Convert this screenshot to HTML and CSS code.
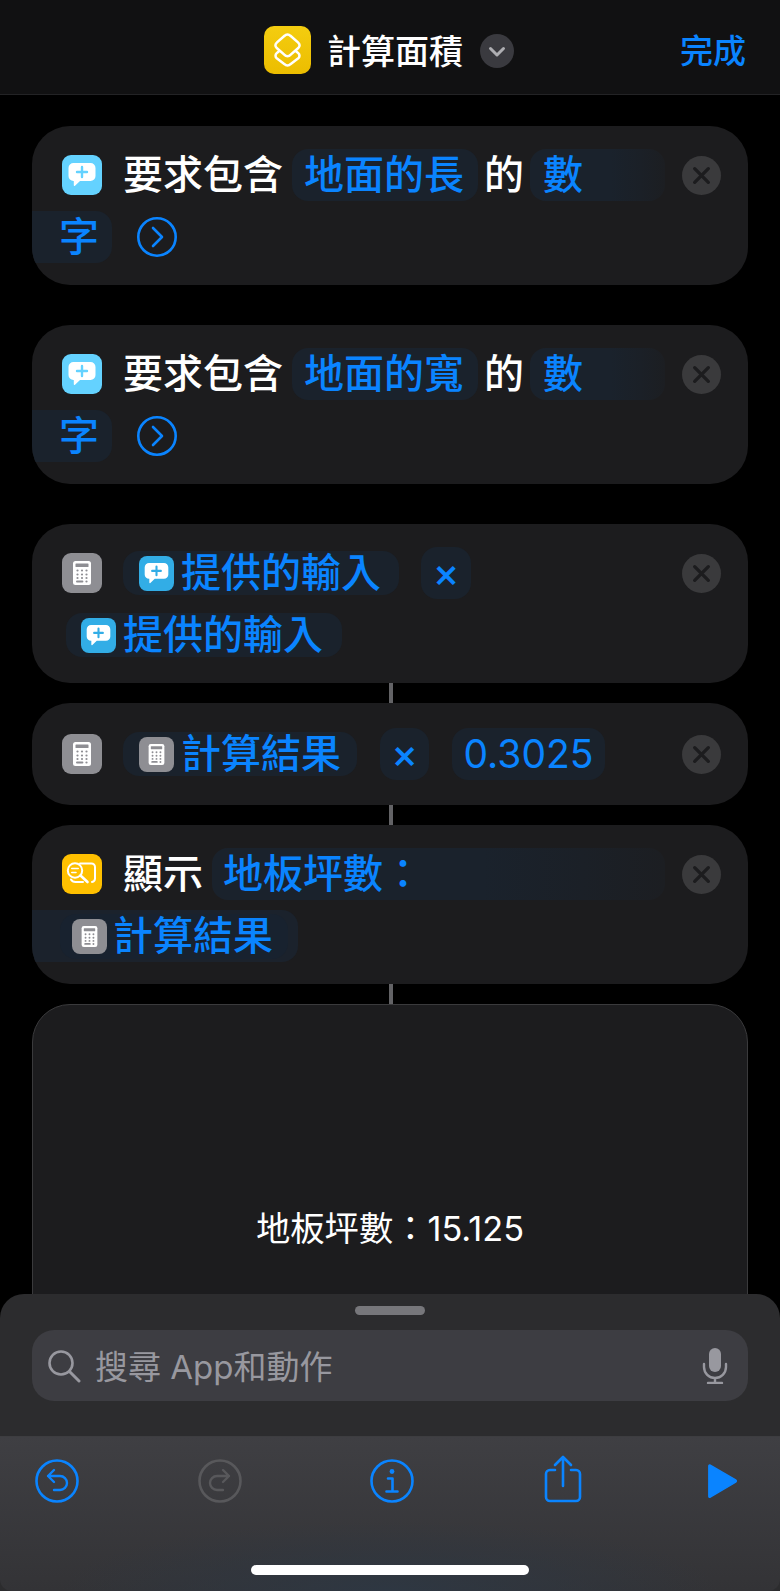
FILE: index.html
```html
<!DOCTYPE html>
<html lang="zh-Hant">
<head>
<meta charset="utf-8">
<title>計算面積</title>
<link rel="stylesheet" href="styles.css">
</head>
<body>
<svg class="defs" width="0" height="0" aria-hidden="true">
  <symbol id="bubble" viewBox="0 0 40 40">
    <path fill="#fff" d="M11.5 8h17a5 5 0 0 1 5 5v8a5 5 0 0 1-5 5H18l-5 4.8c-.6.5-1.2.2-1.2-.5V26h-.3a5 5 0 0 1-5-5v-8a5 5 0 0 1 5-5z"/>
    <path fill="none" stroke="currentColor" stroke-width="2.4" stroke-linecap="round" d="M20 12v10M15 17h10"/>
  </symbol>
  <symbol id="calc" viewBox="0 0 40 40">
    <rect x="11" y="8" width="18" height="24" rx="2.5" fill="#fff"/>
    <rect x="13.5" y="10.5" width="13" height="3.6" rx=".6" fill="#8e8e93"/>
    <g fill="#8e8e93">
      <circle cx="15.5" cy="17.5" r="1.1"/><circle cx="20" cy="17.5" r="1.1"/><circle cx="24.5" cy="17.5" r="1.1"/>
      <circle cx="15.5" cy="21.5" r="1.1"/><circle cx="20" cy="21.5" r="1.1"/><circle cx="24.5" cy="21.5" r="1.1"/>
      <circle cx="15.5" cy="25" r="1.1"/><circle cx="20" cy="25" r="1.1"/><circle cx="24.5" cy="25" r="1.1"/>
      <rect x="14" y="27.5" width="7.4" height="2" rx="1"/><circle cx="24.5" cy="28.5" r="1.1"/>
    </g>
  </symbol>
</svg>

<div class="page">
  <header class="nav">
    <span class="app-icon">
      <svg class="fill" viewBox="0 0 48 48"><g fill="none" stroke="#fff" stroke-width="2.6" stroke-linecap="round" stroke-linejoin="round"><path d="M21 9.5a4 4 0 0 1 6 0l8 7a3.5 3.5 0 0 1 0 5.5l-8 7a4 4 0 0 1-6 0l-8-7a3.5 3.5 0 0 1 0-5.5z"/><path d="M15 25.5l-2 1.7a3.5 3.5 0 0 0 0 5.3l8 6a4 4 0 0 0 6 0l8-6a3.5 3.5 0 0 0 0-5.3l-2-1.7"/></g></svg>
    </span>
    <span class="nav-title">計算面積</span>
    <span class="nav-chevron">
      <svg class="fill" viewBox="0 0 34 34"><path d="M10.5 14.5l6.5 6.5 6.5-6.5" fill="none" stroke="#aeaeb2" stroke-width="3" stroke-linecap="round" stroke-linejoin="round"/></svg>
    </span>
    <span class="nav-done">完成</span>
  </header>

  <main class="flow">
    <section class="card">
      <div class="body">
        <div class="row">
          <span class="ic ic-ask"><svg class="fill"><use href="#bubble"/></svg></span>
          <span class="label first">要求包含</span>
          <span class="token tall p-std">地面的長</span>
          <span class="label of">的</span>
          <span class="token tall open num-open">數</span>
        </div>
        <div class="row">
          <span class="token tall close num-close">字</span>
          <svg class="more" viewBox="0 0 40 40"><circle cx="20" cy="20" r="18.7" fill="none" stroke="#0a84ff" stroke-width="2.6"/><path d="M16 11l9 9-9 9" fill="none" stroke="#0a84ff" stroke-width="2.6" stroke-linecap="round" stroke-linejoin="round"/></svg>
        </div>
      </div>
      <span class="remove"><svg class="fill" viewBox="0 0 40 40"><path d="M13 13l14 14M27 13L13 27"/></svg></span>
    </section>

    <div class="gap-large"></div>

    <section class="card">
      <div class="body">
        <div class="row">
          <span class="ic ic-ask"><svg class="fill"><use href="#bubble"/></svg></span>
          <span class="label first">要求包含</span>
          <span class="token tall p-std">地面的寬</span>
          <span class="label of">的</span>
          <span class="token tall open num-open">數</span>
        </div>
        <div class="row">
          <span class="token tall close num-close">字</span>
          <svg class="more" viewBox="0 0 40 40"><circle cx="20" cy="20" r="18.7" fill="none" stroke="#0a84ff" stroke-width="2.6"/><path d="M16 11l9 9-9 9" fill="none" stroke="#0a84ff" stroke-width="2.6" stroke-linecap="round" stroke-linejoin="round"/></svg>
        </div>
      </div>
      <span class="remove"><svg class="fill" viewBox="0 0 40 40"><path d="M13 13l14 14M27 13L13 27"/></svg></span>
    </section>

    <div class="gap-large"></div>

    <section class="card">
      <div class="body">
        <div class="row">
          <span class="ic ic-calc"><svg class="fill"><use href="#calc"/></svg></span>
          <span class="token var first-var"><span class="ic-sm ic-ask-dark"><svg class="fill"><use href="#bubble"/></svg></span><span class="var-text">提供的輸入</span></span>
          <span class="token tall op op-a">×</span>
        </div>
        <div class="row">
          <span class="token var second-var"><span class="ic-sm ic-ask-dark"><svg class="fill"><use href="#bubble"/></svg></span><span class="var-text">提供的輸入</span></span>
        </div>
      </div>
      <span class="remove"><svg class="fill" viewBox="0 0 40 40"><path d="M13 13l14 14M27 13L13 27"/></svg></span>
    </section>

    <div class="link"></div>

    <section class="card card-single">
      <div class="body">
        <div class="row">
          <span class="ic ic-calc"><svg class="fill"><use href="#calc"/></svg></span>
          <span class="token var first-var result"><span class="ic-sm ic-calc"><svg class="fill"><use href="#calc"/></svg></span><span class="var-text">計算結果</span></span>
          <span class="token tall op op-b">×</span>
          <span class="token tall value">0.3025</span>
        </div>
      </div>
      <span class="remove"><svg class="fill" viewBox="0 0 40 40"><path d="M13 13l14 14M27 13L13 27"/></svg></span>
    </section>

    <div class="link"></div>

    <section class="card">
      <div class="body">
        <div class="row">
          <span class="ic ic-show">
            <svg class="fill" viewBox="0 0 40 40"><g fill="none" stroke="#fff" stroke-width="2" stroke-linecap="round" stroke-linejoin="round"><path d="M18 9.5h11.5a3.5 3.5 0 0 1 3.5 3.5v11.5a3.5 3.5 0 0 1-3 3.4"/><path d="M9 25.5c.8 1.6 2.2 2.5 4.5 2.5H21"/><circle cx="13" cy="16.5" r="7.2"/><path d="M18.5 21.5l7 6.5" stroke-width="2.6"/><path d="M9.8 14.5h6.4M9.8 18.5h4.2" stroke-width="1.6"/></g></svg>
          </span>
          <span class="label first">顯示</span>
          <span class="token tall open text-open">地板坪數：</span>
        </div>
        <div class="row">
          <span class="token tall close text-close"><span class="token var inner-var"><span class="ic-sm ic-calc"><svg class="fill"><use href="#calc"/></svg></span><span class="var-text">計算結果</span></span></span>
        </div>
      </div>
      <span class="remove"><svg class="fill" viewBox="0 0 40 40"><path d="M13 13l14 14M27 13L13 27"/></svg></span>
    </section>

    <div class="link"></div>

    <section class="output">地板坪數：15.125</section>
  </main>

  <aside class="sheet">
    <div class="handle"></div>
    <div class="search">
      <svg class="search-icon" viewBox="0 0 34 34"><circle cx="14" cy="14" r="11.5" fill="none" stroke="#98989f" stroke-width="2.6"/><path d="M22.5 22.5L32 32" fill="none" stroke="#98989f" stroke-width="3" stroke-linecap="round"/></svg>
      <span class="search-text">搜尋 App和動作</span>
      <svg class="mic" viewBox="0 0 26 36"><rect x="7" y="0" width="12" height="24" rx="6" fill="#98989f"/><path d="M2 16v3a11 11 0 0 0 22 0v-3M13 30v4M6 35h14" fill="none" stroke="#98989f" stroke-width="2.4" stroke-linecap="round"/></svg>
    </div>
    <div class="toolbar">
      <svg class="tool tool-undo" viewBox="0 0 44 44"><circle cx="22" cy="22" r="20.5" fill="none" stroke="#0a84ff" stroke-width="2.6"/><path d="M19 11l-6 6 6 6M13 17h12a7 7 0 0 1 0 14h-6" fill="none" stroke="#0a84ff" stroke-width="2.4" stroke-linecap="round" stroke-linejoin="round"/></svg>
      <svg class="tool tool-redo" viewBox="0 0 44 44"><circle cx="22" cy="22" r="20.5" fill="none" stroke="#58585b" stroke-width="2.6"/><path d="M25 11l6 6-6 6M31 17H19a7 7 0 0 0 0 14h6" fill="none" stroke="#58585b" stroke-width="2.4" stroke-linecap="round" stroke-linejoin="round"/></svg>
      <svg class="tool tool-info" viewBox="0 0 44 44"><circle cx="22" cy="22" r="20.5" fill="none" stroke="#0a84ff" stroke-width="2.6"/><circle cx="22" cy="12.5" r="2.4" fill="#0a84ff"/><path d="M18 19.5h4.5V32M16.5 32.5h11" fill="none" stroke="#0a84ff" stroke-width="2.6" stroke-linecap="round" stroke-linejoin="round"/></svg>
      <svg class="tool tool-share" viewBox="0 0 38 48"><path d="M11 15H6a4 4 0 0 0-4 4v23a4 4 0 0 0 4 4h26a4 4 0 0 0 4-4V19a4 4 0 0 0-4-4h-5M19 31V2M11 10l8-8 8 8" fill="none" stroke="#0a84ff" stroke-width="2.6" stroke-linecap="round" stroke-linejoin="round"/></svg>
      <svg class="tool tool-play" viewBox="0 0 34 36"><path d="M3 1.5c0-.8.8-1.2 1.5-.8l27 15.5c1 .6 1 2 0 2.6l-27 15.9c-.7.4-1.5 0-1.5-.8z" fill="#0a84ff" stroke="#0a84ff" stroke-width="1.5" stroke-linejoin="round"/></svg>
    </div>
    <div class="home"></div>
  </aside>
</div>
</body>
</html>
```
FILE: styles.css
```css
* { box-sizing: border-box; }
html, body { margin: 0; padding: 0; background: #000; }
body { font-family: Inter, "Noto Sans CJK TC", "Liberation Sans", sans-serif; color: #fff; }
.defs { position: absolute; }
.page { position: relative; width: 780px; height: 1591px; overflow: hidden; background: #000; }
.fill { display: block; width: 100%; height: 100%; }

.nav { height: 95px; padding-top: 6px; background: #111112; border-bottom: 1px solid #232325; display: flex; align-items: center; }
.app-icon { width: 47px; height: 48px; margin-left: 264px; border-radius: 10px; background: linear-gradient(#f4cd10, #ecbd00); flex: none; }
.nav-title { margin-left: 16px; padding-top: 4px; font-size: 34px; font-weight: 500; line-height: 48px; width: 136px; }
.nav-chevron { width: 34px; height: 34px; margin-left: 17px; margin-top: 2px; border-radius: 50%; background: #3a3a3f; flex: none; }
.nav-done { margin-left: 166px; padding-top: 2px; font-size: 33px; font-weight: 500; color: #0a84ff; line-height: 48px; white-space: nowrap; }

.flow { padding: 31px 32px 0; }
.card { display: flex; background: #1c1c1e; border-radius: 38px; padding: 23px 27px 22px 30px; overflow: hidden; }
.card-single { padding-top: 25px; padding-bottom: 25px; }
.body { flex: 1; min-width: 0; display: flex; flex-direction: column; gap: 10px; }
.row { display: flex; align-items: center; height: 52px; }
.gap-large { height: 40px; }
.link { width: 4px; height: 20px; margin-left: 357px; background: #636366; }

.ic { width: 40px; height: 40px; border-radius: 9px; flex: none; }
.ic-sm { width: 35px; height: 35px; border-radius: 8px; flex: none; }
.ic-ask { background: #64d2ff; color: #64d2ff; }
.ic-ask-dark { background: #32ade6; color: #32ade6; }
.ic-calc { background: #8e8e93; }
.ic-show { background: #ffc000; }

.label { font-size: 40px; font-weight: 500; line-height: 52px; white-space: nowrap; flex: none; }
.first { margin-left: 21px; }
.of { margin-left: 6px; }

.token { display: flex; align-items: center; color: #0a84ff; font-size: 40px; font-weight: 500; background: #1a222c; border-radius: 16px; white-space: nowrap; flex: none; }
.tall { height: 52px; line-height: 52px; }
.p-std { margin-left: 9px; padding: 0 14px 0 12px; }
.open { background: linear-gradient(to right, #1a222c 60%, #1b2027 82%, #1c1e22 100%); }
.close { background: #1a222c; border-radius: 0 16px 16px 0; margin-left: -30px; }
.num-open { width: 135px; margin-left: 6px; padding-left: 13px; }
.num-close { width: 80px; padding-left: 27px; }
.more { width: 40px; height: 40px; margin-left: 25px; flex: none; }
.text-open { width: 453px; margin-left: 9px; padding-left: 11px; }
.text-close { width: 266px; padding-left: 28px; background: #1b222c; }

.var { height: 44px; line-height: 44px; padding: 0 18px 0 16px; }
.var-text { margin-left: 7px; }
.first-var { margin-left: 21px; }
.second-var { margin-left: 4px; padding-left: 15px; padding-right: 19px; }
.result { padding-right: 16px; }
.inner-var { background: #18222f; padding: 0 15px 0 12px; height: 45px; }
.inner-var .var-text { margin-left: 6px; }
.op { justify-content: center; font-weight: 500; }
.op-a { width: 50px; margin-left: 22px; }
.op-b { width: 49px; margin-left: 23px; }
.value { width: 153px; margin-left: 23px; justify-content: center; font-size: 39px; font-weight: 400; }

.remove { width: 39px; height: 39px; margin-top: 7px; border-radius: 50%; background: #3a3a3c; flex: none; }
.remove path { fill: none; stroke: #1c1c1e; stroke-width: 3.4; stroke-linecap: round; }

.output { height: 448px; padding-bottom: 4px; background: #1c1c1e; border: 1.5px solid #3a3a3c; border-radius: 38px; display: flex; align-items: center; justify-content: center; font-size: 34.3px; }

.sheet { position: absolute; left: 0; right: 0; bottom: 0; height: 297px; background: #2c2c2e; border-radius: 24px 24px 0 0; }
.handle { width: 70px; height: 9px; margin: 12px auto 0; border-radius: 5px; background: #77777b; }
.search { display: flex; align-items: center; height: 71px; margin: 15px 32px 0; padding: 0 20px 0 15px; border-radius: 22px; background: #3d3d42; }
.search-icon { width: 34px; height: 34px; flex: none; }
.search-text { margin-left: 14px; padding-top: 3px; flex: 1; font-size: 33px; color: #98989f; line-height: 44px; white-space: nowrap; }
.mic { width: 26px; height: 36px; flex: none; }

.toolbar { display: flex; align-items: flex-start; height: 155px; margin-top: 35px; padding: 19px 0 0 35px; border-top: 1px solid #3d3d40; background: radial-gradient(ellipse 330px 70px at 50% 100%, #2e3742, rgba(46,55,66,0)), linear-gradient(#3f3f43, #333336); border-radius: 0 0 12px 12px; }
.tool { flex: none; display: block; }
.tool-undo, .tool-redo, .tool-info { width: 44px; height: 44px; margin-top: 3px; }
.tool-redo { margin-left: 119px; }
.tool-info { margin-left: 128px; }
.tool-share { width: 38px; height: 48px; margin-left: 130px; margin-top: -1px; }
.tool-play { width: 32px; height: 35px; margin-left: 124px; margin-top: 8px; }

.home { position: absolute; left: 251px; bottom: 16px; width: 278px; height: 10px; border-radius: 5px; background: #fff; }
```
